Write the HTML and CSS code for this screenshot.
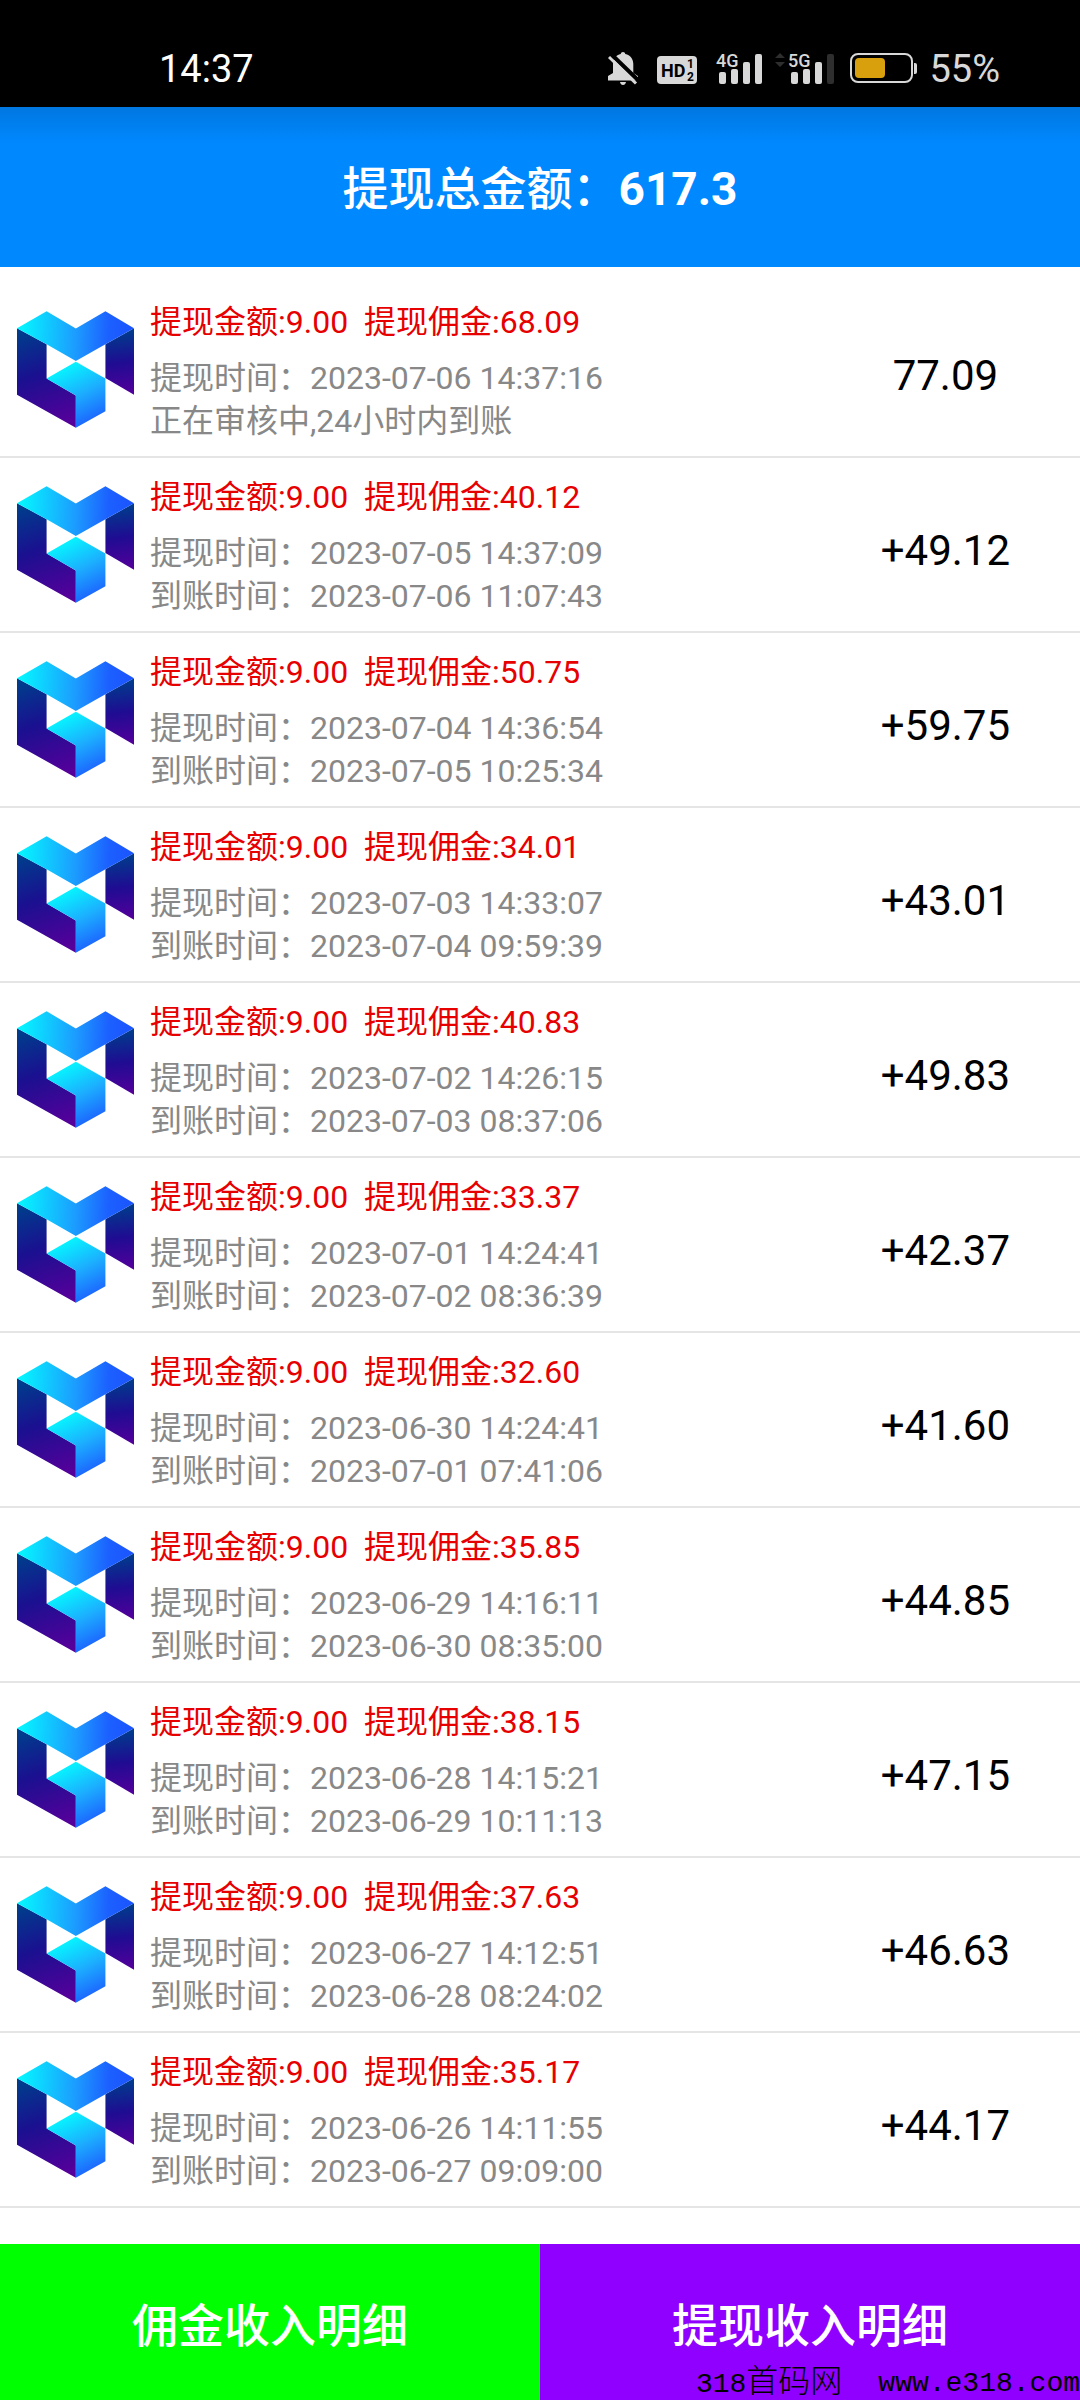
FILE: index.html
```html
<!DOCTYPE html>
<html lang="zh-CN">
<head>
    <meta charset="UTF-8">
    <meta name="viewport" content="width=device-width, initial-scale=1.0">
    <title>提现收入明细</title>
    <link rel="stylesheet" href="styles.css">
</head>
<body>
    <!-- logo shared by every row -->
    <svg class="defs" width="0" height="0" aria-hidden="true">
        <defs>
            <linearGradient id="gTop" gradientUnits="userSpaceOnUse" x1="70" y1="110" x2="390" y2="125">
                <stop offset="0" stop-color="#06f2ff"/>
                <stop offset="0.5" stop-color="#1c9bff"/>
                <stop offset="0.8" stop-color="#1c60ff"/>
                <stop offset="1" stop-color="#1b55ff"/>
            </linearGradient>
            <linearGradient id="gLeft" gradientUnits="userSpaceOnUse" x1="90" y1="120" x2="190" y2="400">
                <stop offset="0" stop-color="#003c8c"/>
                <stop offset="0.45" stop-color="#1a1090"/>
                <stop offset="1" stop-color="#55009a"/>
            </linearGradient>
            <linearGradient id="gRight" gradientUnits="userSpaceOnUse" x1="350" y1="125" x2="370" y2="310">
                <stop offset="0" stop-color="#003c8c"/>
                <stop offset="0.5" stop-color="#1f0c92"/>
                <stop offset="1" stop-color="#51009a"/>
            </linearGradient>
            <linearGradient id="gBottom" gradientUnits="userSpaceOnUse" x1="200" y1="225" x2="285" y2="395">
                <stop offset="0" stop-color="#06f6ff"/>
                <stop offset="0.5" stop-color="#1caeff"/>
                <stop offset="1" stop-color="#1c60ff"/>
            </linearGradient>
        </defs>
        <symbol id="logo" viewBox="53 64 348 348">
            <path fill="url(#gLeft)" d="M53 115l88 48v102l87 50v96L53 313z"/>
            <path fill="url(#gRight)" d="M401 115v198l-85-50V163z"/>
            <path fill="url(#gBottom)" d="M228 215l88 50v97l-88 49v-96l-87-50z"/>
            <path fill="url(#gTop)" d="M53 115l88-50 87 51 88-51 85 50-85 48-88 50-87-50z"/>
        </symbol>
    </svg>

    <div class="status-bar">
        <span class="clock">14:37</span>
        <div class="status-icons">
            <svg width="37" height="36" viewBox="0 0 37 36">
                <path fill="#d8d8d8" d="M15 1c1.400 0 2 .8 2.300 2 5 1 8 5 8 10v9l4.700 3v4.500H0V25l5-3v-9c0-5 3-9 7.700-10 .3-1.200.9-2 2.300-2zM12 31h6c-.4 2-1.400 3-3 3s-2.600-1-3-3z"/>
                <path stroke="#000" stroke-width="4" d="M3 3l29 28"/>
                <path stroke="#d8d8d8" stroke-width="3" d="M1 6l27 26.500"/>
            </svg>
            <svg width="47" height="36" viewBox="0 0 47 36">
                <rect y="5" width="40" height="28" rx="4" fill="#d8d8d8"/>
                <text class="hd" x="4" y="26">HD</text>
                <text class="hd-sub" x="30" y="17">1</text>
                <text class="hd-sub" x="30" y="30">2</text>
            </svg>
            <svg width="47" height="36" viewBox="0 0 47 36" fill="#d8d8d8">
                <text class="net" x="0" y="16">4G</text>
                <rect x="3" y="21" width="7" height="12" rx="2"/>
                <rect x="15" y="18" width="7" height="15" rx="2"/>
                <rect x="27" y="11" width="7" height="22" rx="2"/>
                <rect x="39" y="3" width="7" height="30" rx="2"/>
            </svg>
            <svg width="63" height="36" viewBox="0 0 63 36" fill="#d8d8d8">
                <path fill="#2e2e2e" d="M0 7l5-5 5 5zM0 11h10l-5 5z"/>
                <text class="net" x="13" y="16">5G</text>
                <rect x="16" y="21" width="7" height="12" rx="2"/>
                <rect x="28" y="18" width="7" height="15" rx="2"/>
                <rect x="40" y="11" width="7" height="22" rx="2"/>
                <rect x="52" y="3" width="7" height="30" rx="2" fill="#2e2e2e"/>
            </svg>
            <svg width="67" height="36" viewBox="0 0 67 36">
                <rect x="1" y="3" width="61" height="28" rx="7" fill="none" stroke="#d8d8d8" stroke-width="2"/>
                <rect x="5" y="7" width="30" height="20" rx="4" fill="#d9a00e"/>
                <path fill="#d8d8d8" d="M64 12h1q2 0 2 2v7q0 2-2 2h-1z"/>
            </svg>
            <span class="battery">55%</span>
        </div>
    </div>

    <header class="header">
        <h1>提现总金额：<strong>617.3</strong></h1>
    </header>

    <main class="content">
        <ul class="list">
            <li class="item">
                <svg class="logo"><use href="#logo"/></svg>
                <div class="info">
                    <p class="money">提现金额:9.00&nbsp; 提现佣金:68.09</p>
                    <p>提现时间：2023-07-06 14:37:16</p>
                    <p>正在审核中,24小时内到账</p>
                </div>
                <div class="amount">77.09</div>
            </li>
            <li class="item">
                <svg class="logo"><use href="#logo"/></svg>
                <div class="info">
                    <p class="money">提现金额:9.00&nbsp; 提现佣金:40.12</p>
                    <p>提现时间：2023-07-05 14:37:09</p>
                    <p>到账时间：2023-07-06 11:07:43</p>
                </div>
                <div class="amount">+49.12</div>
            </li>
            <li class="item">
                <svg class="logo"><use href="#logo"/></svg>
                <div class="info">
                    <p class="money">提现金额:9.00&nbsp; 提现佣金:50.75</p>
                    <p>提现时间：2023-07-04 14:36:54</p>
                    <p>到账时间：2023-07-05 10:25:34</p>
                </div>
                <div class="amount">+59.75</div>
            </li>
            <li class="item">
                <svg class="logo"><use href="#logo"/></svg>
                <div class="info">
                    <p class="money">提现金额:9.00&nbsp; 提现佣金:34.01</p>
                    <p>提现时间：2023-07-03 14:33:07</p>
                    <p>到账时间：2023-07-04 09:59:39</p>
                </div>
                <div class="amount">+43.01</div>
            </li>
            <li class="item">
                <svg class="logo"><use href="#logo"/></svg>
                <div class="info">
                    <p class="money">提现金额:9.00&nbsp; 提现佣金:40.83</p>
                    <p>提现时间：2023-07-02 14:26:15</p>
                    <p>到账时间：2023-07-03 08:37:06</p>
                </div>
                <div class="amount">+49.83</div>
            </li>
            <li class="item">
                <svg class="logo"><use href="#logo"/></svg>
                <div class="info">
                    <p class="money">提现金额:9.00&nbsp; 提现佣金:33.37</p>
                    <p>提现时间：2023-07-01 14:24:41</p>
                    <p>到账时间：2023-07-02 08:36:39</p>
                </div>
                <div class="amount">+42.37</div>
            </li>
            <li class="item">
                <svg class="logo"><use href="#logo"/></svg>
                <div class="info">
                    <p class="money">提现金额:9.00&nbsp; 提现佣金:32.60</p>
                    <p>提现时间：2023-06-30 14:24:41</p>
                    <p>到账时间：2023-07-01 07:41:06</p>
                </div>
                <div class="amount">+41.60</div>
            </li>
            <li class="item">
                <svg class="logo"><use href="#logo"/></svg>
                <div class="info">
                    <p class="money">提现金额:9.00&nbsp; 提现佣金:35.85</p>
                    <p>提现时间：2023-06-29 14:16:11</p>
                    <p>到账时间：2023-06-30 08:35:00</p>
                </div>
                <div class="amount">+44.85</div>
            </li>
            <li class="item">
                <svg class="logo"><use href="#logo"/></svg>
                <div class="info">
                    <p class="money">提现金额:9.00&nbsp; 提现佣金:38.15</p>
                    <p>提现时间：2023-06-28 14:15:21</p>
                    <p>到账时间：2023-06-29 10:11:13</p>
                </div>
                <div class="amount">+47.15</div>
            </li>
            <li class="item">
                <svg class="logo"><use href="#logo"/></svg>
                <div class="info">
                    <p class="money">提现金额:9.00&nbsp; 提现佣金:37.63</p>
                    <p>提现时间：2023-06-27 14:12:51</p>
                    <p>到账时间：2023-06-28 08:24:02</p>
                </div>
                <div class="amount">+46.63</div>
            </li>
            <li class="item">
                <svg class="logo"><use href="#logo"/></svg>
                <div class="info">
                    <p class="money">提现金额:9.00&nbsp; 提现佣金:35.17</p>
                    <p>提现时间：2023-06-26 14:11:55</p>
                    <p>到账时间：2023-06-27 09:09:00</p>
                </div>
                <div class="amount">+44.17</div>
            </li>
        </ul>
    </main>

    <footer class="tabs">
        <button type="button" class="tab tab-green">佣金收入明细</button>
        <button type="button" class="tab tab-purple">提现收入明细</button>
        <div class="watermark">
            <span>318<span class="site-name">首码网</span></span>
            <span>www.e318.com</span>
        </div>
    </footer>
</body>
</html>
```
FILE: styles.css
```css
:root {
    --blue: #0088ff;
    --green: #00ff00;
    --purple: #9000ff;
    --red: #e60000;
    --gray: #888;
    --line: #e5e5e5;
}
* {
    box-sizing: border-box;
}
body {
    margin: 0;
    min-height: 100vh;
    display: flex;
    flex-direction: column;
    background: #fff;
    color: #000;
    font-family: Roboto, "Noto Sans CJK SC", sans-serif;
}
h1, p, ul {
    margin: 0;
    padding: 0;
}
.defs {
    position: absolute;
}

/* status bar */
.status-bar {
    display: flex;
    justify-content: space-between;
    padding: 51px 80px 20px 159px;
    background: #000;
    color: #fff;
    font-size: 38px;
    line-height: 36px;
}
.status-icons {
    display: flex;
    gap: 12px;
}
.battery {
    color: #d8d8d8;
}
.hd {
    font-size: 18px;
    font-weight: 700;
}
.hd-sub {
    font-size: 12px;
    font-weight: 700;
}
.net {
    font-size: 18px;
    font-weight: 500;
}

/* header */
.header {
    padding: 52px 20px 48px;
    background: linear-gradient(#0077e0, var(--blue) 36px);
    color: #fff;
    text-align: center;
}
.header h1 {
    font-size: 46px;
    font-weight: 500;
    line-height: 60px;
}
.header strong {
    font-weight: 700;
}

/* records */
.content {
    flex: 1;
    padding: 16px 0 36px;
}
.list {
    list-style: none;
}
.item {
    display: flex;
    align-items: center;
    padding: 18px 2px 13px 17px;
    border-bottom: 2px solid var(--line);
}
.logo {
    flex: none;
    align-self: flex-start;
    width: 117px;
    height: 117px;
    margin: 10px 16px 0 0;
}
.info {
    flex: 1;
    color: var(--gray);
    font-size: 32px;
    line-height: 43px;
}
.info .money {
    margin-bottom: 13px;
    color: var(--red);
}
.amount {
    width: 25%;
    padding-top: 8px;
    font-size: 42px;
    line-height: 48px;
    text-align: center;
}

/* bottom buttons */
.tabs {
    position: relative;
    display: flex;
}
.tab {
    flex: 1;
    padding: 52px 0 44px;
    border: none;
    color: #fff;
    font-family: inherit;
    font-size: 46px;
    font-weight: 500;
    line-height: 60px;
    cursor: pointer;
}
.tab-green {
    background: var(--green);
}
.tab-purple {
    background: var(--purple);
}
.watermark {
    position: absolute;
    right: 0;
    bottom: 0;
    display: flex;
    gap: 36px;
    font-family: "Liberation Mono", "Noto Sans CJK SC", monospace;
    font-size: 28px;
    line-height: 30px;
    pointer-events: none;
}
.site-name {
    font-size: 32px;
    font-weight: 300;
}
```
